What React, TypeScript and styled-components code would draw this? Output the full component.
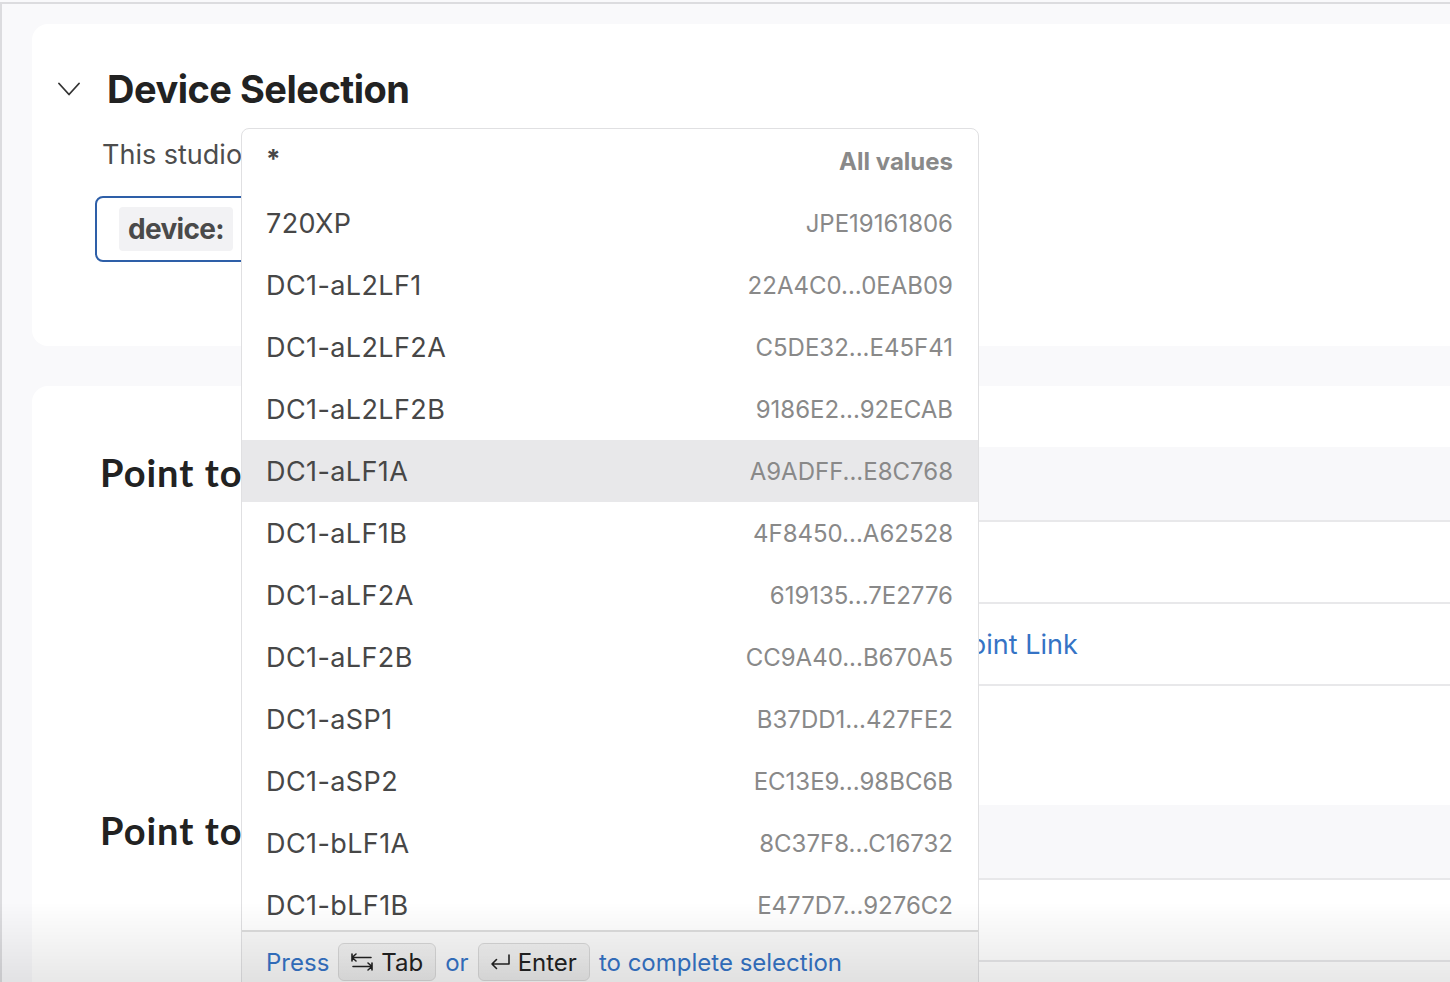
import React from "react";
import styled, { createGlobalStyle } from "styled-components";

const Global = createGlobalStyle`
  html, body { margin: 0; padding: 0; height: 100%; overflow: hidden; background: #f9f9fb; }
  body { font-family: Inter, "Noto Sans", sans-serif; color: #222; }
  #root { height: 100%; }
  * { box-sizing: border-box; }
`;

const Frame = styled.div`
  position: relative;
  margin-top: 2px;
  height: calc(100% - 2px);
  border-top: 2px solid #dcdcdf;
  border-left: 2px solid #dcdcdf;
  padding: 20px 0 0 30px;
  display: flex;
  flex-direction: column;
  gap: 40px;
  overflow: hidden;
`;

const Card = styled.section<{ $pad: string }>`
  background: #fff;
  border-radius: 16px;
  margin-right: -24px;
  padding: ${(p) => p.$pad};
  flex-shrink: 0;
`;

const HeaderRow = styled.div`
  display: flex;
  align-items: center;
  gap: 27px;
  height: 48px;
`;

const Chevron = styled.svg`
  width: 22px;
  height: 14px;
  flex-shrink: 0;
`;

const Title = styled.h2`
  margin: 0;
  font-size: 38px;
  line-height: 48px;
  font-weight: 700;
  letter-spacing: -0.5px;
  color: #222;
`;

const Body = styled.div`
  margin-left: 37px;
  display: flex;
  flex-direction: column;
`;

const Intro = styled.p`
  margin: 24px 0 0 7px;
  font-size: 27px;
  line-height: 36px;
  color: #4d4d4d;
`;

const SearchBox = styled.div`
  margin-top: 23px;
  width: 620px;
  height: 66px;
  border: 2px solid #2e5fa8;
  border-radius: 8px;
  padding-left: 22px;
  display: flex;
  align-items: center;
`;

const Chip = styled.span`
  height: 44px;
  padding: 0 9px;
  display: inline-flex;
  align-items: center;
  background: #f2f2f4;
  border-radius: 4px;
  font-size: 28px;
  font-weight: 700;
  letter-spacing: -0.7px;
  color: #4a4a4a;
`;

const Section = styled.div<{ $gap?: number }>`
  display: grid;
  grid-template-columns: 380px 1fr;
  margin-top: ${(p) => p.$gap ?? 0}px;
`;

const SectionTitle = styled.h3`
  margin: 0;
  font-family: Lato, Inter, sans-serif;
  font-size: 38px;
  line-height: 50px;
  font-weight: 700;
  letter-spacing: 1px;
  color: #222;
  white-space: nowrap;
`;

const Table = styled.div`
  display: flex;
  flex-direction: column;
`;

const THead = styled.div`
  height: 75px;
  background: #f8f8fa;
  border-bottom: 2px solid #e8e8ea;
`;

const TRow = styled.div`
  height: 82px;
  border-bottom: 2px solid #e8e8ea;
  display: flex;
  align-items: center;
  padding-left: 300px;
`;

const AddLink = styled.span`
  font-size: 27px;
  color: #3573c5;
  white-space: nowrap;
`;

const Dropdown = styled.div`
  position: absolute;
  left: 239px;
  top: 124px;
  width: 738px;
  background: #fff;
  border: 1px solid #e0e0e2;
  border-radius: 8px;
  overflow: hidden;
  z-index: 5;
`;

const List = styled.div`
  height: 801px;
  padding-top: 1px;
  overflow: hidden;
`;

const Option = styled.div<{ $active?: boolean }>`
  height: 62px;
  padding: 0 25px 0 24px;
  display: flex;
  align-items: center;
  justify-content: space-between;
  background: ${(p) => (p.$active ? "#e8e8ea" : "transparent")};
`;

const OptLabel = styled.span<{ $star?: boolean }>`
  font-size: ${(p) => (p.$star ? "26px" : "27px")};
  font-weight: ${(p) => (p.$star ? 700 : 400)};
  letter-spacing: ${(p) => (p.$star ? "0" : "0.4px")};
  color: #474747;
  margin-top: ${(p) => (p.$star ? "-6px" : "0")};
`;

const OptValue = styled.span<{ $bold?: boolean }>`
  font-size: 24px;
  font-weight: ${(p) => (p.$bold ? 700 : 400)};
  color: #898989;
`;

const Footer = styled.div`
  border-top: 2px solid #dcdcdc;
  background: #f8f8f8;
  height: 60px;
  padding: 11px 24px 0;
  display: flex;
  align-items: flex-start;
  gap: 9px;
`;

const Hint = styled.span`
  font-size: 24px;
  line-height: 39px;
  color: #3573c5;
`;

const Kbd = styled.span`
  height: 38px;
  padding: 0 12px 0 11px;
  display: inline-flex;
  align-items: center;
  gap: 7px;
  background: linear-gradient(#f0f0f0, #e9e9e9);
  border: 1px solid #d6d6d6;
  border-radius: 6px;
  font-size: 24px;
  color: #222;
`;

const Fade = styled.div`
  position: fixed;
  left: 0;
  right: 0;
  bottom: 0;
  height: 80px;
  pointer-events: none;
  z-index: 10;
  background: linear-gradient(rgba(0, 0, 0, 0), rgba(0, 0, 0, 0.09));
`;

const options: [string, string][] = [
  ["720XP", "JPE19161806"],
  ["DC1-aL2LF1", "22A4C0...0EAB09"],
  ["DC1-aL2LF2A", "C5DE32...E45F41"],
  ["DC1-aL2LF2B", "9186E2...92ECAB"],
  ["DC1-aLF1A", "A9ADFF...E8C768"],
  ["DC1-aLF1B", "4F8450...A62528"],
  ["DC1-aLF2A", "619135...7E2776"],
  ["DC1-aLF2B", "CC9A40...B670A5"],
  ["DC1-aSP1", "B37DD1...427FE2"],
  ["DC1-aSP2", "EC13E9...98BC6B"],
  ["DC1-bLF1A", "8C37F8...C16732"],
  ["DC1-bLF1B", "E477D7...9276C2"],
];

const TabIcon = () => (
  <svg width="24" height="20" viewBox="0 0 24 20" fill="none" stroke="#222" strokeWidth="1.6" strokeLinecap="round" strokeLinejoin="round">
    <path d="M2 2v7M2 5.5h19M6 2l-4 3.5 4 3.5" />
    <path d="M22 11v7M3 14.5h19M18 11l4 3.5-4 3.5" />
  </svg>
);

const EnterIcon = () => (
  <svg width="21" height="16" viewBox="0 0 21 16" fill="none" stroke="#222" strokeWidth="1.6" strokeLinecap="round" strokeLinejoin="round">
    <path d="M19 1v9H2M6.5 5.5 2 10l4.5 4.5" />
  </svg>
);

export default function App() {
  return (
    <>
      <Global />
      <Frame>
        <Card $pad="41px 0 84px 26px">
          <HeaderRow>
            <Chevron viewBox="0 0 22 14" fill="none" stroke="#333" strokeWidth="1.8" strokeLinecap="round" strokeLinejoin="round">
              <polyline points="1,1.5 11,12.5 21,1.5" />
            </Chevron>
            <Title>Device Selection</Title>
          </HeaderRow>
          <Body>
            <Intro>This studio applies its configuration to the selected devices.</Intro>
            <SearchBox>
              <Chip>device:</Chip>
            </SearchBox>
          </Body>
        </Card>
        <Card $pad="61px 0 0 68px">
          <Section>
            <SectionTitle>Point to Point Links</SectionTitle>
            <Table>
              <THead />
              <TRow />
              <TRow>
                <AddLink>Add Point-to-Point Link</AddLink>
              </TRow>
            </Table>
          </Section>
          <Section $gap={119}>
            <SectionTitle>Point to Multipoint</SectionTitle>
            <Table>
              <THead />
              <TRow />
              <TRow />
            </Table>
          </Section>
        </Card>
        <Dropdown>
          <List>
            <Option>
              <OptLabel $star>*</OptLabel>
              <OptValue $bold>All values</OptValue>
            </Option>
            {options.map(([name, id]) => (
              <Option key={name} $active={name === "DC1-aLF1A"}>
                <OptLabel>{name}</OptLabel>
                <OptValue>{id}</OptValue>
              </Option>
            ))}
          </List>
          <Footer>
            <Hint>Press</Hint>
            <Kbd>
              <TabIcon />
              Tab
            </Kbd>
            <Hint>or</Hint>
            <Kbd>
              <EnterIcon />
              Enter
            </Kbd>
            <Hint>to complete selection</Hint>
          </Footer>
        </Dropdown>
      </Frame>
      <Fade />
    </>
  );
}
